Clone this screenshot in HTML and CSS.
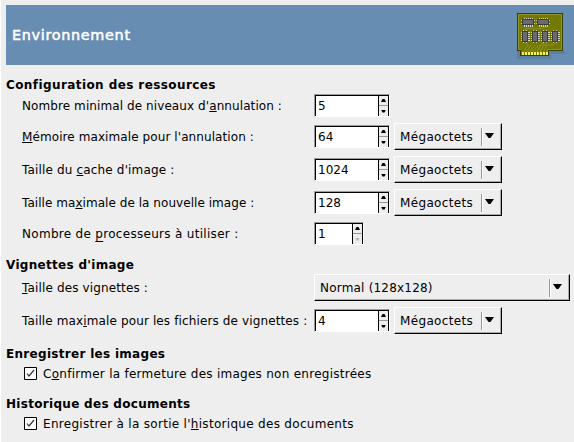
FILE: index.html
```html
<!DOCTYPE html>
<html lang="fr">
<head>
<meta charset="utf-8">
<title>Environnement</title>
<link rel="stylesheet" href="styles.css">
</head>
<body>
<main class="page">
  <header class="banner">
    <h1>Environnement</h1>
    <svg class="board" width="54" height="50" viewBox="0 0 54 50" shape-rendering="crispEdges">
      <path d="M1 38h48v3H35v5H1z" fill="#526f8f" opacity=".45"/>
      <path d="M1 0h46v38H33v5H4v-5H1z" fill="#374000"/>
      <path d="M2 1h44v36H32v5H5v-5H2z" fill="#91942a"/>
      <path d="M3 2h42v34H31v6H5v-6H3z" fill="#747a00"/>
      <g fill="none" stroke="#8a8f24" shape-rendering="auto">
        <path d="M9.500 18v-2.500h18l3-2M9.500 30l3 3M29 31h-4l-4 7M39 30l-2 2h-9l-4 6"/>
        <path d="M12 32l-4 7M15 32l-4 7M19 32l-5 7M22 32l-5 7M25 32l-4 7M28 32l-4 7M31 32l-4 7"/>
      </g>
      <path d="M6.500 39v3M9.500 39v3M12.500 39v3M15.500 39v3M18.500 39v3M21.500 39v3M24.500 39v3M27.500 39v3M30.500 39v3" stroke="#f1f26a" stroke-width="2"/>
      <g transform="translate(0 1)">
        <path d="M8 4.500h9M8 11.500h9M23 4.500h9M23 11.500h9" stroke="#d4d4ca" stroke-width="2" stroke-dasharray="1 1"/>
        <path d="M5 6.500h14M5 9.500h14M20 6.500h14M20 9.500h14" stroke="#c9c9bd"/>
        <path d="M6 5h12v6H6zM21 5h12v6H21z" fill="#3c3c3c"/>
        <path d="M7 6h10v4H7zM22 6h10v4h-10z" fill="#6b6b6b"/>
      </g>
      <g>
        <path d="M5.500 19v9M12.500 19v9M15.500 19v9M22.500 19v9M25.500 19v9M32.500 19v9M35.500 19v9M42.500 19v9" stroke="#d4d4ca" stroke-width="2" stroke-dasharray="1 1"/>
        <path d="M7.500 17v13M10.500 17v13M17.500 17v13M20.500 17v13M27.500 17v13M30.500 17v13M37.500 17v13M40.500 17v13" stroke="#c9c9bd"/>
        <path d="M6 18h6v11H6zM16 18h6v11h-6zM26 18h6v11h-6zM36 18h6v11h-6z" fill="#3c3c3c"/>
        <path d="M7 19h4v9H7zM17 19h4v9h-4zM27 19h4v9h-4zM37 19h4v9h-4z" fill="#6b6b6b"/>
      </g>
    </svg>
  </header>

  <section class="group resources">
    <h2 class="t1">Configuration des ressources</h2>
    <div class="rows">
      <div class="row"><label class="l1">Nombre minimal de niveaux d'<u>a</u>nnulation :</label>
        <span class="spin"><span class="value">5</span><span class="steps"><i class="up"></i><i class="down"></i></span></span></div>
      <div class="row"><label class="l2"><u>M</u>émoire maximale pour l'annulation :</label>
        <span class="spin"><span class="value">64</span><span class="steps"><i class="up"></i><i class="down"></i></span></span>
        <span class="combo"><span class="value">Mégaoctets</span><i class="arrow"></i></span></div>
      <div class="row"><label class="l3">Taille du <u>c</u>ache d'image :</label>
        <span class="spin"><span class="value">1024</span><span class="steps"><i class="up"></i><i class="down"></i></span></span>
        <span class="combo"><span class="value">Mégaoctets</span><i class="arrow"></i></span></div>
      <div class="row"><label class="l4">Taille ma<u>x</u>imale de la nouvelle image :</label>
        <span class="spin"><span class="value">128</span><span class="steps"><i class="up"></i><i class="down"></i></span></span>
        <span class="combo"><span class="value">Mégaoctets</span><i class="arrow"></i></span></div>
      <div class="row"><label class="l5">Nombre de <u class="low">p</u>rocesseurs à utiliser :</label>
        <span class="spin narrow"><span class="value">1</span><span class="steps"><i class="up"></i><i class="down off"></i></span></span></div>
    </div>
  </section>

  <section class="group thumbs">
    <h2>Vignettes d'image</h2>
    <div class="rows">
      <div class="row"><label class="l6"><u>T</u>aille des vignettes :</label>
        <span class="combo wide"><span class="value">Normal (128x128)</span><i class="arrow"></i></span></div>
      <div class="row"><label class="l7">Taille max<u>i</u>male pour les fichiers de vignettes :</label>
        <span class="spin"><span class="value">4</span><span class="steps"><i class="up"></i><i class="down"></i></span></span>
        <span class="combo"><span class="value">Mégaoctets</span><i class="arrow"></i></span></div>
    </div>
  </section>

  <section class="group checks">
    <h2>Enregistrer les images</h2>
    <div class="check"><svg width="13" height="13" viewBox="0 0 13 13"><path d="M.5.5h12v12H.5z" fill="#fff" stroke="#000"/><path d="M3 6.500l2 2.500 5-6" fill="none" stroke="#333" stroke-width="1.200"/></svg><label class="c1">C<u>o</u>nfirmer la fermeture des images non enregistrées</label></div>
  </section>

  <section class="group checks">
    <h2>Historique des documents</h2>
    <div class="check"><svg width="13" height="13" viewBox="0 0 13 13"><path d="M.5.5h12v12H.5z" fill="#fff" stroke="#000"/><path d="M3 6.500l2 2.500 5-6" fill="none" stroke="#333" stroke-width="1.200"/></svg><label class="c2">Enregistrer à la sortie l'<u>h</u>istorique des documents</label></div>
  </section>
</main>
</body>
</html>
```
FILE: styles.css
```css
* { box-sizing: border-box; }
body {
  margin: 0;
  overflow: hidden;
  background: #eee;
  color: #000;
  font: 12px/16px "DejaVu Sans", sans-serif;
}
.page {
  height: 442px;
  padding: 5px 4px 0 5px;
  border-left: 1px solid #fff;
}
.banner {
  display: flex;
  align-items: center;
  justify-content: space-between;
  height: 60px;
  margin-right: -4px;
  padding: 0 4px 0 6px;
  background: #688db2;
  color: #fff;
}
.board { display: block; margin-top: 6px; }
h1, h2 { margin: 0; font-weight: bold; white-space: nowrap; }
h1 {
  font-size: 14.4px;
  font-weight: normal;
  line-height: 20px;
  letter-spacing: .68px;
  -webkit-text-stroke: .5px #fff;
}
h2 { font-size: 12px; line-height: 16px; height: 17px; letter-spacing: .3px; }
h2.t1 { letter-spacing: .41px; }
.resources { padding-top: 12px; }
.thumbs { padding-top: 12px; }
.rows { display: grid; gap: 6px; }
.row { display: flex; align-items: center; padding-left: 16px; }
label, .value { white-space: nowrap; }
.row label { width: 292px; }
.l1 { letter-spacing: .09px; }
.l2 { letter-spacing: .09px; }
.l3 { letter-spacing: .16px; }
.l4 { letter-spacing: .05px; }
.l5 { letter-spacing: .3px; }
.l6 { letter-spacing: .14px; }
.l7 { letter-spacing: .125px; }
.c1 { letter-spacing: .27px; }
.c2 { letter-spacing: .3px; }
u {
  text-decoration-thickness: 1px;
  text-underline-offset: 1px;
  text-decoration-skip-ink: none;
}
u.low { text-underline-offset: 3px; }
.spin {
  display: flex;
  width: 76px;
  height: 23px;
  margin-right: 4px;
  border: 1px solid;
  border-color: #9c9c9c #fff #fff #9c9c9c;
  box-shadow: inset 1px 1px #000;
  background: #fff;
}
.spin .value { flex: 1; padding: 3px 0 0 3px; }
.spin.narrow { width: 50px; }
.steps {
  display: grid;
  grid-template-rows: 10px 10px;
  width: 11px;
  height: 21px;
  border: solid #000;
  border-width: 1px 1px 0;
  background: #eee;
}
.steps i { display: grid; place-items: center; }
.up { border-bottom: 1px solid #999; }
.steps i::before {
  content: "";
  width: 5px;
  height: 3px;
  background: #000;
  clip-path: polygon(0 0, 100% 0, 70% 100%, 30% 100%);
}
.steps .up::before { clip-path: polygon(0 100%, 30% 0, 70% 0, 100% 100%); }
.steps .off::before { background: #bbb; }
.combo {
  display: flex;
  align-items: center;
  width: 108px;
  height: 27px;
  padding-left: 5px;
  border: 1px solid;
  border-color: #fff #000 #000 #fff;
  box-shadow: inset -1px -1px #aaa;
}
.combo .value { flex: 1; letter-spacing: .35px; }
.combo.wide { width: 256px; }
.combo.wide .value { letter-spacing: .2px; }
.arrow {
  display: flex;
  align-items: center;
  width: 20px;
  height: 18px;
  border-left: 1px solid #999;
  box-shadow: inset 1px 0 #fff;
}
.arrow::before {
  content: "";
  width: 9px;
  height: 5px;
  margin: -2px 0 0 3px;
  background: #000;
  clip-path: polygon(0 0, 100% 0, 60% 100%, 40% 100%);
}
.checks { padding-top: 12px; }
.checks h2 { height: 20px; }
.checks + .checks { padding-top: 15px; }
.check { display: flex; align-items: center; height: 15px; padding-left: 18px; }
.check svg { margin-right: 6px; }
```
